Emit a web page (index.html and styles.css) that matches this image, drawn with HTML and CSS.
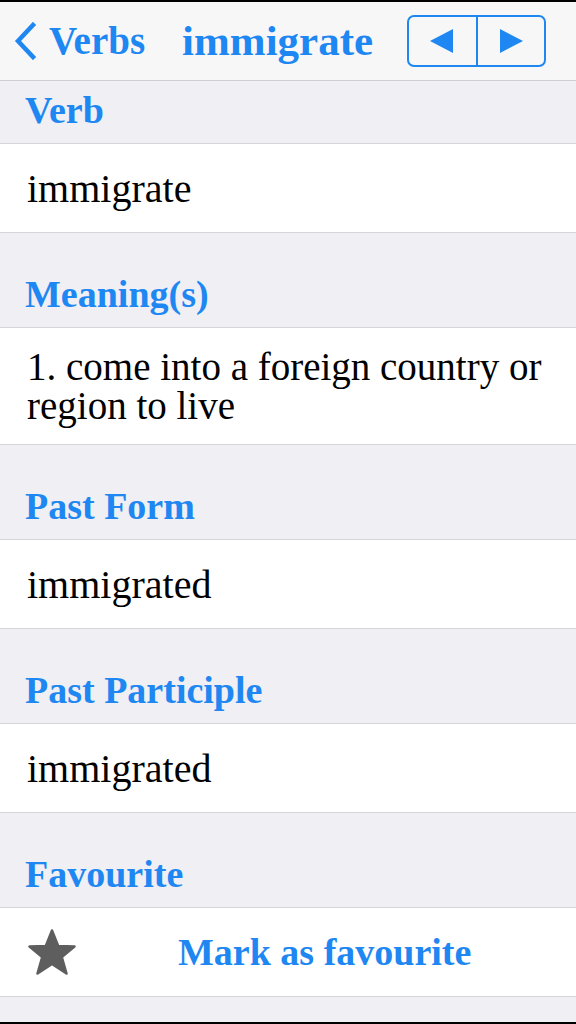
FILE: index.html
```html
<!DOCTYPE html>
<html lang="en">
<head>
    <meta charset="UTF-8">
    <meta name="viewport" content="width=device-width, initial-scale=1.0">
    <title>immigrate</title>
    <link rel="stylesheet" href="styles.css">
</head>
<body>
    <div class="screen">
        <header class="navbar">
            <a class="back" href="#">
                <svg width="24" height="38" viewBox="0 0 24 38">
                    <path d="M20 3 L5 19 L20 35" fill="none" stroke="#1f87f1" stroke-width="4.5" stroke-linecap="square"/>
                </svg>
                <span>Verbs</span>
            </a>
            <h1 class="title">immigrate</h1>
            <div class="pager">
                <button class="pager-btn" type="button">
                    <svg width="24" height="24" viewBox="0 0 24 24"><path d="M0 12 L23 0 L23 24 Z" fill="#1f87f1"/></svg>
                </button>
                <button class="pager-btn" type="button">
                    <svg width="24" height="24" viewBox="0 0 24 24"><path d="M24 12 L1 0 L1 24 Z" fill="#1f87f1"/></svg>
                </button>
            </div>
        </header>

        <main class="table">
            <div class="section-header first">Verb</div>
            <div class="cell">immigrate</div>

            <div class="section-header">Meaning(s)</div>
            <div class="cell multi">1. come into a foreign country or region to live</div>

            <div class="section-header">Past Form</div>
            <div class="cell">immigrated</div>

            <div class="section-header">Past Participle</div>
            <div class="cell">immigrated</div>

            <div class="section-header">Favourite</div>
            <div class="cell fav">
                <svg class="star" width="50" height="47" viewBox="0 0 50 47">
                    <path d="M25 1.5 L31.2 17 L47.5 17.5 L34.8 28 L39.5 44.5 L25 35 L10.5 44.5 L15.2 28 L2.5 17.5 L18.8 17 Z" fill="#5e5e5e" stroke="#5e5e5e" stroke-width="2.5" stroke-linejoin="round"/>
                </svg>
                <span class="fav-label">Mark as favourite</span>
            </div>
        </main>
    </div>
</body>
</html>
```

FILE: styles.css
```css
body {
    margin: 0;
    padding: 0;
    font-family: 'Liberation Serif', 'Times New Roman', serif;
    background-color: #000;
}

.screen {
    height: 1024px;
    box-sizing: border-box;
    border-top: 2px solid #000;
    border-bottom: 2px solid #000;
    background-color: #efeff4;
    display: flex;
    flex-direction: column;
}

.navbar {
    height: 78px;
    background-color: #f7f7f8;
    border-bottom: 1px solid #cfcfd3;
    display: flex;
    align-items: center;
    padding: 0 30px 0 13px;
}

.back {
    display: flex;
    align-items: center;
    gap: 12px;
    color: #1f87f1;
    text-decoration: none;
    font-weight: bold;
    font-size: 39px;
}

.back span {
    position: relative;
    top: -1px;
}

.title {
    margin: 0 0 0 37px;
    color: #1f87f1;
    font-size: 43px;
    font-weight: bold;
    position: relative;
    top: -1px;
}

.pager {
    margin-left: auto;
    display: flex;
    width: 139px;
    height: 52px;
    box-sizing: border-box;
    border: 2px solid #1f87f1;
    border-radius: 7px;
    overflow: hidden;
}

.pager-btn {
    flex: 1;
    background: none;
    border: none;
    padding: 0;
    display: flex;
    align-items: center;
    justify-content: center;
    cursor: pointer;
}

.pager-btn + .pager-btn {
    border-left: 2px solid #1f87f1;
}

.table {
    display: flex;
    flex-direction: column;
}

.section-header {
    height: 94px;
    box-sizing: border-box;
    display: flex;
    align-items: flex-end;
    padding: 0 0 11px 25px;
    color: #1f87f1;
    font-size: 38px;
    font-weight: bold;
}

.section-header.first {
    height: 62px;
}

.cell {
    background-color: #fff;
    border-top: 1px solid #d6d6da;
    border-bottom: 1px solid #d6d6da;
    min-height: 90px;
    box-sizing: border-box;
    display: flex;
    align-items: center;
    padding: 0 20px 0 27px;
    color: #000;
    font-size: 40px;
}

.cell.multi {
    padding: 19px 30px 19px 27px;
    line-height: 39px;
    font-size: 39px;
}

.fav {
    gap: 101px;
}

.fav-label {
    color: #1f87f1;
    font-weight: bold;
    font-size: 38px;
}
```
